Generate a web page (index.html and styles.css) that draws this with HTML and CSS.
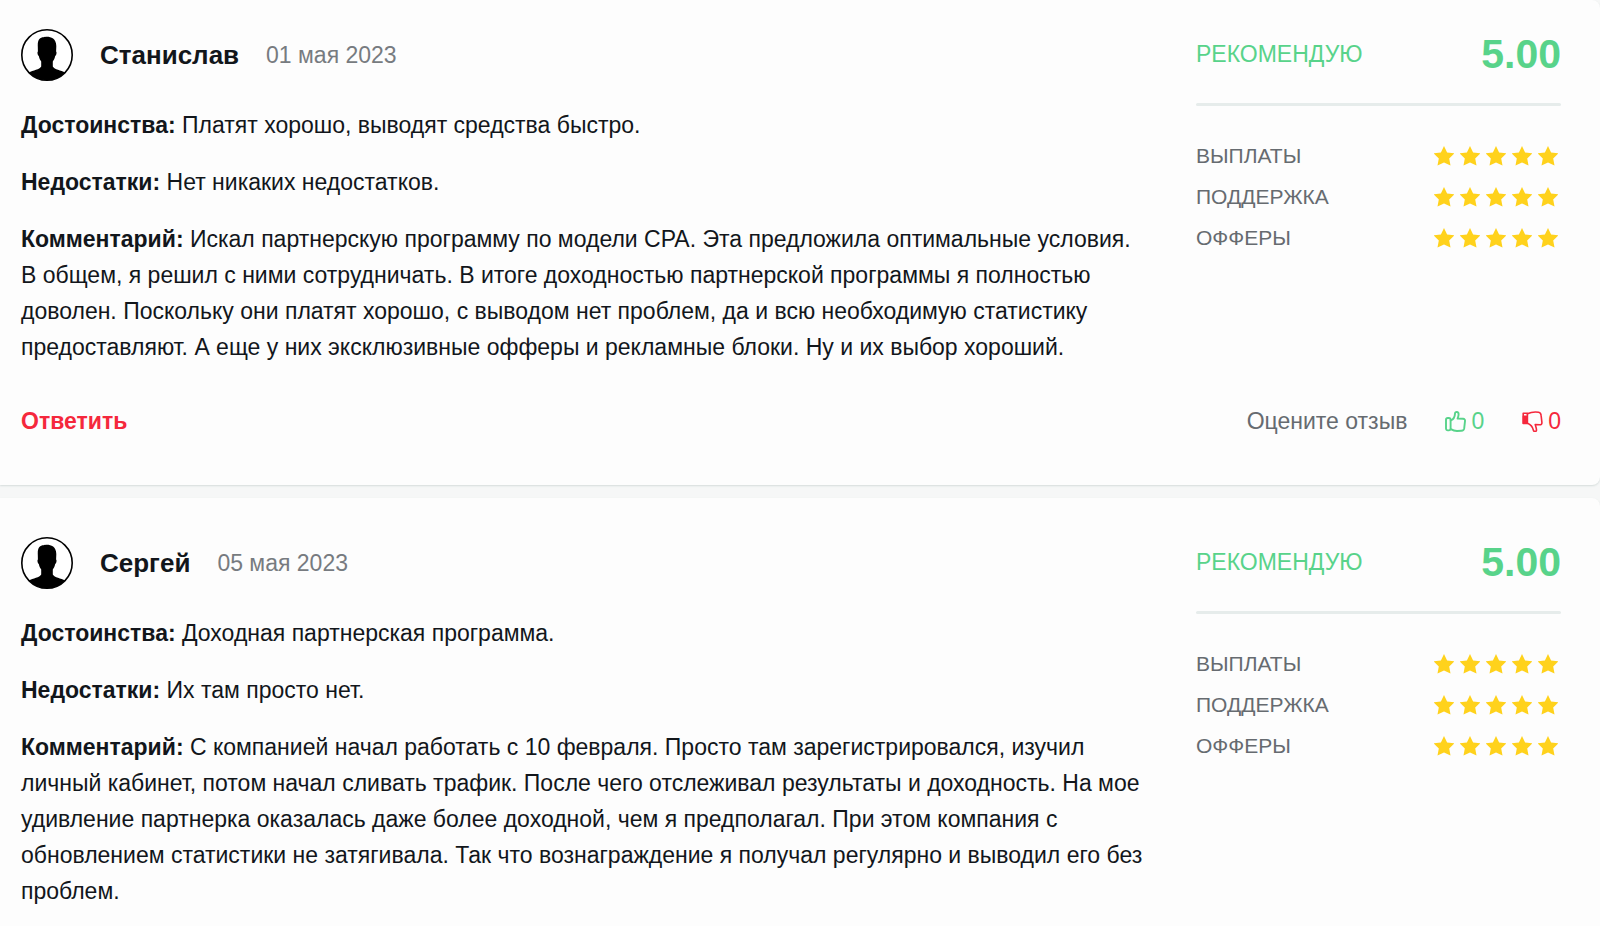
FILE: index.html
```html
<!DOCTYPE html>
<html lang="ru">
<head>
    <meta charset="UTF-8">
    <meta name="viewport" content="width=device-width, initial-scale=1.0">
    <title>Отзывы</title>
    <link rel="stylesheet" href="styles.css">
</head>
<body>

<!-- Icons -->
<svg class="sprite" aria-hidden="true">
    <symbol id="avatar" viewBox="0 0 52 52">
        <circle cx="26" cy="26" r="25.2" fill="#fff" stroke="#000" stroke-width="1.6"/>
        <path d="M16.8 17.5C16.4 10.5 19 8.4 22.5 8.3C25 7.2 35.6 6.6 35.3 17.5L35.1 22.6C36 22.9 35.4 26.4 34.2 27.1C33.6 30 32.6 31.5 31.8 32.6V37.4C33.4 40.6 40 41 44.2 43.6A25.2 25.2 0 0 1 7.8 43.6C12 41 18.6 40.6 20.2 37.4V32.6C19.4 31.5 18.4 30 17.8 27.1C16.6 26.4 16 22.9 16.9 22.6Z"/>
    </symbol>
    <symbol id="star" viewBox="0 0 20 20">
        <path d="M10 0L13.1 6.4L20.4 7.4L15.2 12.4L16.5 19.6L10 16.4L3.5 19.6L4.8 12.4L-0.4 7.4L6.9 6.4Z"/>
    </symbol>
    <symbol id="like" viewBox="0 0 21 21">
        <g fill="none" stroke="currentColor" stroke-width="1.9" stroke-linejoin="round" stroke-linecap="round">
            <rect x="1" y="7" width="4.6" height="12.4" rx="1.8"/>
            <path d="M5.8 9.4C8.6 8.4 9.8 6.4 10 2.6C10.1 0.4 13.6 0.4 13.6 3.2C13.6 5 13.2 6 12.6 7.6L18 7.8C19.6 7.9 20.2 8.8 20 10.2L19.2 17.4C19 18.8 18 19.7 16.4 19.8L12 20C9.4 19.9 7.6 19.2 5.8 18.2"/>
        </g>
    </symbol>
    <symbol id="dislike" viewBox="0 0 21 21">
        <g fill="none" stroke="currentColor" stroke-width="1.6" stroke-linejoin="round" stroke-linecap="round">
            <path d="M1.2 2.2H5.4V12.4H1.2Z"/>
            <path d="M2.6 5.4H5.2V12.2H1.4V5.4Z" fill="currentColor"/>
            <path d="M5.4 2.8C9 1 13 0.7 16.6 1.2C18.6 1.5 19 2.6 19.1 4.4L19.9 11.4C20 13 19.2 13.8 17.8 13.8L13.2 13.6C13.8 15.6 14.6 17.4 14.5 19.2C14.3 21 11.8 20.9 11.4 19.2C10.8 16.4 9.4 13.6 5.4 12.2"/>
        </g>
    </symbol>
    <symbol id="stars" viewBox="-1 0 126 20">
        <use href="#star" width="20" height="20" overflow="visible"/>
        <use href="#star" x="26" width="20" height="20"/>
        <use href="#star" x="52" width="20" height="20"/>
        <use href="#star" x="78" width="20" height="20"/>
        <use href="#star" x="104" width="20" height="20"/>
    </symbol>
</svg>

<main class="reviews">
    <article class="review">
        <div class="review-body">
            <div class="review-content">
                <header class="author">
                    <svg class="avatar" aria-hidden="true"><use href="#avatar"/></svg>
                    <h2>Станислав</h2>
                    <time datetime="2023-05-01">01 мая 2023</time>
                </header>
                <p><strong>Достоинства:</strong> Платят хорошо, выводят средства быстро.</p>
                <p><strong>Недостатки:</strong> Нет никаких недостатков.</p>
                <p><strong>Комментарий:</strong> Искал партнерскую программу по модели CPA. Эта предложила оптимальные условия. В общем, я решил с ними сотрудничать. В итоге доходностью партнерской программы я полностью доволен. Поскольку они платят хорошо, с выводом нет проблем, да и всю необходимую статистику предоставляют. А еще у них эксклюзивные офферы и рекламные блоки. Ну и их выбор хороший.</p>
            </div>
            <aside class="rating">
                <div class="rating-total">
                    <span>РЕКОМЕНДУЮ</span>
                    <strong>5.00</strong>
                </div>
                <hr>
                <ul>
                    <li>ВЫПЛАТЫ <svg class="stars" role="img"><use href="#stars"/></svg></li>
                    <li>ПОДДЕРЖКА <svg class="stars" role="img"><use href="#stars"/></svg></li>
                    <li>ОФФЕРЫ <svg class="stars" role="img"><use href="#stars"/></svg></li>
                </ul>
            </aside>
        </div>
        <footer class="review-footer">
            <a class="reply" href="#">Ответить</a>
            <div class="votes">
                <span>Оцените отзыв</span>
                <button type="button" class="vote vote-up"><svg aria-hidden="true"><use href="#like"/></svg>0</button>
                <button type="button" class="vote vote-down"><svg aria-hidden="true"><use href="#dislike"/></svg>0</button>
            </div>
        </footer>
    </article>

    <article class="review">
        <div class="review-body">
            <div class="review-content">
                <header class="author">
                    <svg class="avatar" aria-hidden="true"><use href="#avatar"/></svg>
                    <h2>Сергей</h2>
                    <time datetime="2023-05-05">05 мая 2023</time>
                </header>
                <p><strong>Достоинства:</strong> Доходная партнерская программа.</p>
                <p><strong>Недостатки:</strong> Их там просто нет.</p>
                <p><strong>Комментарий:</strong> С компанией начал работать с 10 февраля. Просто там зарегистрировался, изучил личный кабинет, потом начал сливать трафик. После чего отслеживал результаты и доходность. На мое удивление партнерка оказалась даже более доходной, чем я предполагал. При этом компания с обновлением статистики не затягивала. Так что вознаграждение я получал регулярно и выводил его без проблем.</p>
            </div>
            <aside class="rating">
                <div class="rating-total">
                    <span>РЕКОМЕНДУЮ</span>
                    <strong>5.00</strong>
                </div>
                <hr>
                <ul>
                    <li>ВЫПЛАТЫ <svg class="stars" role="img"><use href="#stars"/></svg></li>
                    <li>ПОДДЕРЖКА <svg class="stars" role="img"><use href="#stars"/></svg></li>
                    <li>ОФФЕРЫ <svg class="stars" role="img"><use href="#stars"/></svg></li>
                </ul>
            </aside>
        </div>
    </article>
</main>

</body>
</html>
```
FILE: styles.css
```css
/* General Styles */
* {
    box-sizing: border-box;
}
body {
    font-family: "Liberation Sans", Arial, sans-serif;
    font-size: 23px;
    line-height: 36px;
    margin: 0;
    color: #12161b;
    background-color: #f6f7f7;
}
.sprite {
    display: none;
}
.reviews {
    display: flex;
    flex-direction: column;
    gap: 13px;
}

/* Review card */
.review {
    padding: 39px 39px 46px 21px;
    background-color: #fdfdfd;
    border-radius: 0 8px 8px 0;
    box-shadow: 0 1px 2px #d5dcdb;
}
.review:first-child {
    padding-top: 29px;
}
.review-body {
    display: flex;
    gap: 50px;
}
.review-content {
    flex: 1;
}
.review-content p {
    margin: 0 0 21px;
}
.review-content p:last-child {
    margin-bottom: 0;
}
.author {
    display: flex;
    align-items: center;
    gap: 27px;
    margin-bottom: 26px;
}
.author h2 {
    margin: 0;
    font-size: 26px;
}
.author time {
    color: #777b80;
}
.avatar {
    width: 52px;
    height: 52px;
}

/* Rating */
.rating {
    width: 365px;
    color: #666b70;
    font-size: 21px;
}
.rating-total {
    display: flex;
    justify-content: space-between;
    align-items: center;
    height: 50px;
    color: #58d38a;
    font-size: 23px;
}
.rating-total strong {
    font-size: 41px;
}
.rating hr {
    height: 3px;
    margin: 24px 0 29px;
    border: none;
    border-radius: 2px;
    background-color: #e6eceb;
}
.rating ul {
    list-style: none;
    margin: 0;
    padding: 0;
}
.rating li {
    display: flex;
    justify-content: space-between;
    align-items: center;
    height: 41px;
}
.stars {
    width: 126px;
    height: 20px;
    margin-right: 2px;
    fill: #ffd21c;
}

/* Footer */
.review-footer {
    display: flex;
    justify-content: space-between;
    margin-top: 38px;
}
.reply {
    color: #f5283c;
    font-weight: bold;
    text-decoration: none;
}
.votes {
    display: flex;
    gap: 38px;
    color: #666b70;
}
.vote {
    display: flex;
    align-items: center;
    gap: 5px;
    padding: 0;
    border: none;
    background: none;
    font: inherit;
    cursor: pointer;
}
.vote svg {
    width: 21px;
    height: 21px;
}
.vote-up {
    color: #58d38a;
}
.vote-down {
    color: #f5283c;
}
```
